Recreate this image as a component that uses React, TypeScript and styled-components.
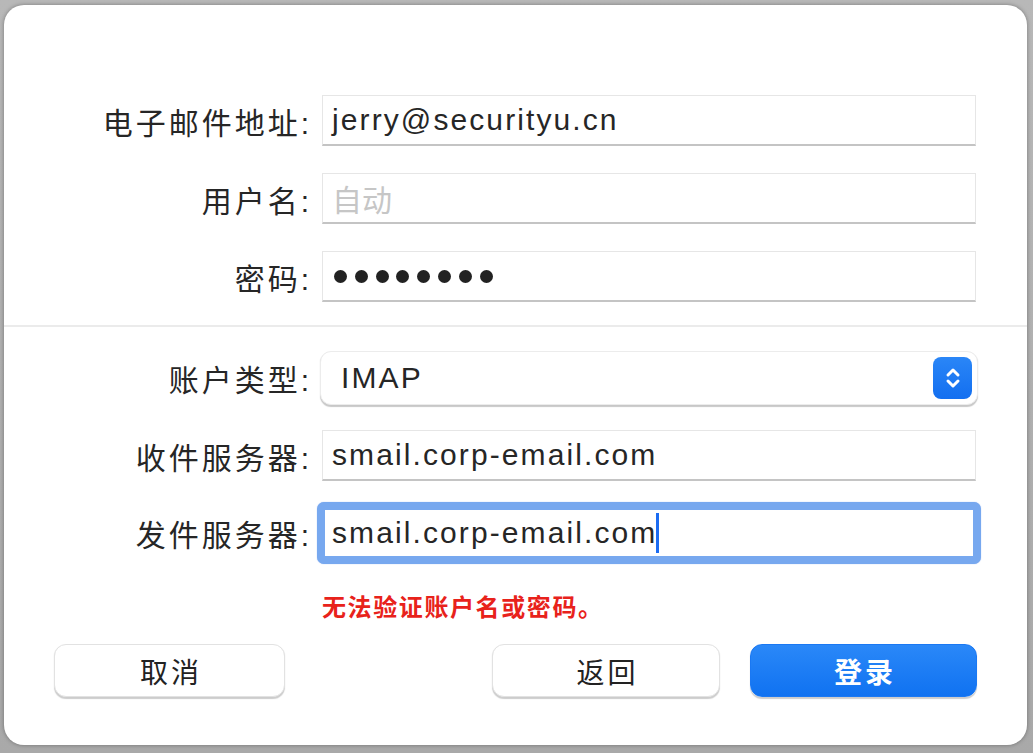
import styled, { createGlobalStyle } from 'styled-components'

const GlobalStyle = createGlobalStyle`
  html, body {
    margin: 0;
    padding: 0;
    background: #adadad;
  }
  body {
    font-family: "Liberation Sans", "Noto Sans CJK SC", sans-serif;
  }
`

const Screen = styled.div`
  width: 1033px;
  height: 753px;
  padding: 5px 6px 8px 4px;
  box-sizing: border-box;
  background: linear-gradient(#b8b8b8, #a9a9a9);
`

const Panel = styled.div`
  height: 100%;
  background: #ffffff;
  border-radius: 20px;
  box-shadow: 0 0 4px rgba(0, 0, 0, 0.35);
  padding-top: 90px;
  box-sizing: border-box;
  display: flex;
  flex-direction: column;
`

const Row = styled.div<{ $h: number; $mb?: number }>`
  display: grid;
  grid-template-columns: 307px 654px;
  column-gap: 11px;
  align-items: center;
  height: ${p => p.$h}px;
  margin-bottom: ${p => p.$mb ?? 0}px;
`

const Label = styled.div`
  justify-self: end;
  font-size: 30px;
  letter-spacing: 3px;
  margin-right: -1px;
  color: #262626;
  white-space: nowrap;
`

const Field = styled.div`
  height: 51px;
  box-sizing: border-box;
  background: #fff;
  border: 1px solid #e6e6e6;
  border-bottom: 2px solid #c4c4c4;
  display: flex;
  align-items: center;
  padding-left: 9px;
  font-size: 30px;
  letter-spacing: 2.1px;
  color: #262626;
  white-space: nowrap;
`

const FocusField = styled(Field)`
  height: 62px;
  margin: 0 -5px;
  border: 8px solid #77a8ef;
  border-radius: 7px;
  padding-left: 7px;
  box-shadow: 0 0 1px rgba(60, 120, 230, 0.6);
`

const Placeholder = styled.span`
  color: #c6c6c6;
  letter-spacing: 0;
`

const Dots = styled.div`
  display: flex;
  gap: 7.8px;
  padding-left: 2px;
`

const Dot = styled.span`
  width: 13px;
  height: 13px;
  border-radius: 50%;
  background: #222;
`

const Caret = styled.span`
  display: inline-block;
  width: 3px;
  height: 40px;
  margin-left: -1px;
  background: #1b6cf2;
`

const Separator = styled.div`
  height: 2px;
  background: #ebebeb;
  margin: 23px 0 24px;
`

const Select = styled.div`
  height: 54px;
  margin: 0 -2px;
  box-sizing: border-box;
  background: #fff;
  border-radius: 11px;
  border: 1px solid #ececec;
  box-shadow: 0 1.5px 1px rgba(0, 0, 0, 0.22);
  display: flex;
  align-items: center;
  justify-content: space-between;
  padding: 0 5px 0 20px;
  font-size: 30px;
  letter-spacing: 2.1px;
  color: #262626;
`

const Stepper = styled.div`
  width: 39px;
  height: 42px;
  border-radius: 8px;
  background: linear-gradient(#2a86f7, #136ff0);
  display: flex;
  align-items: center;
  justify-content: center;
`

const ErrorText = styled.div`
  grid-column: 2;
  font-size: 24px;
  font-weight: bold;
  letter-spacing: 1.6px;
  color: #e8221b;
`

const ButtonBar = styled.div`
  display: flex;
  align-items: center;
  padding: 0 50px 0 50px;
  margin-top: 26px;
`

const Spacer = styled.div`
  flex: 1;
`

const Button = styled.button<{ $primary?: boolean; $w: number }>`
  width: ${p => p.$w}px;
  height: 53px;
  border-radius: 12px;
  font-family: "Liberation Sans", "Noto Sans CJK SC", sans-serif;
  font-size: 28px;
  letter-spacing: 3px;
  padding: 0 0 0 3px;
  cursor: pointer;
  border: 1px solid ${p => (p.$primary ? '#1a78f3' : '#e2e2e2')};
  background: ${p => (p.$primary ? 'linear-gradient(#2a88f8, #1072f1)' : '#fff')};
  color: ${p => (p.$primary ? '#fff' : '#222')};
  font-weight: ${p => (p.$primary ? 'bold' : 'normal')};
  box-shadow: 0 1.5px 1px rgba(0, 0, 0, 0.2);
  & + & {
    margin-left: 30px;
  }
`

function StepperIcon() {
  return (
    <svg width="16" height="26" viewBox="0 0 16 26" fill="none">
      <path d="M3 10 L8 5 L13 10" stroke="#fff" strokeWidth="3" strokeLinecap="round" strokeLinejoin="round" />
      <path d="M3 16 L8 21 L13 16" stroke="#fff" strokeWidth="3" strokeLinecap="round" strokeLinejoin="round" />
    </svg>
  )
}

export default function App() {
  return (
    <>
      <GlobalStyle />
      <Screen>
        <Panel>
          <Row $h={51} $mb={27}>
            <Label>电子邮件地址:</Label>
            <Field>jerry@securityu.cn</Field>
          </Row>
          <Row $h={51} $mb={27}>
            <Label>用户名:</Label>
            <Field>
              <Placeholder>自动</Placeholder>
            </Field>
          </Row>
          <Row $h={51}>
            <Label>密码:</Label>
            <Field>
              <Dots>
                {Array.from({ length: 8 }).map((_, i) => (
                  <Dot key={i} />
                ))}
              </Dots>
            </Field>
          </Row>

          <Separator />

          <Row $h={54} $mb={25}>
            <Label>账户类型:</Label>
            <Select>
              IMAP
              <Stepper>
                <StepperIcon />
              </Stepper>
            </Select>
          </Row>
          <Row $h={51} $mb={21}>
            <Label>收件服务器:</Label>
            <Field>smail.corp-email.com</Field>
          </Row>
          <Row $h={62} $mb={24}>
            <Label>发件服务器:</Label>
            <FocusField>
              smail.corp-email.com
              <Caret />
            </FocusField>
          </Row>
          <Row $h={30}>
            <ErrorText>无法验证账户名或密码。</ErrorText>
          </Row>

          <ButtonBar>
            <Button $w={231}>取消</Button>
            <Spacer />
            <Button $w={228}>返回</Button>
            <Button $w={227} $primary>登录</Button>
          </ButtonBar>
        </Panel>
      </Screen>
    </>
  )
}
